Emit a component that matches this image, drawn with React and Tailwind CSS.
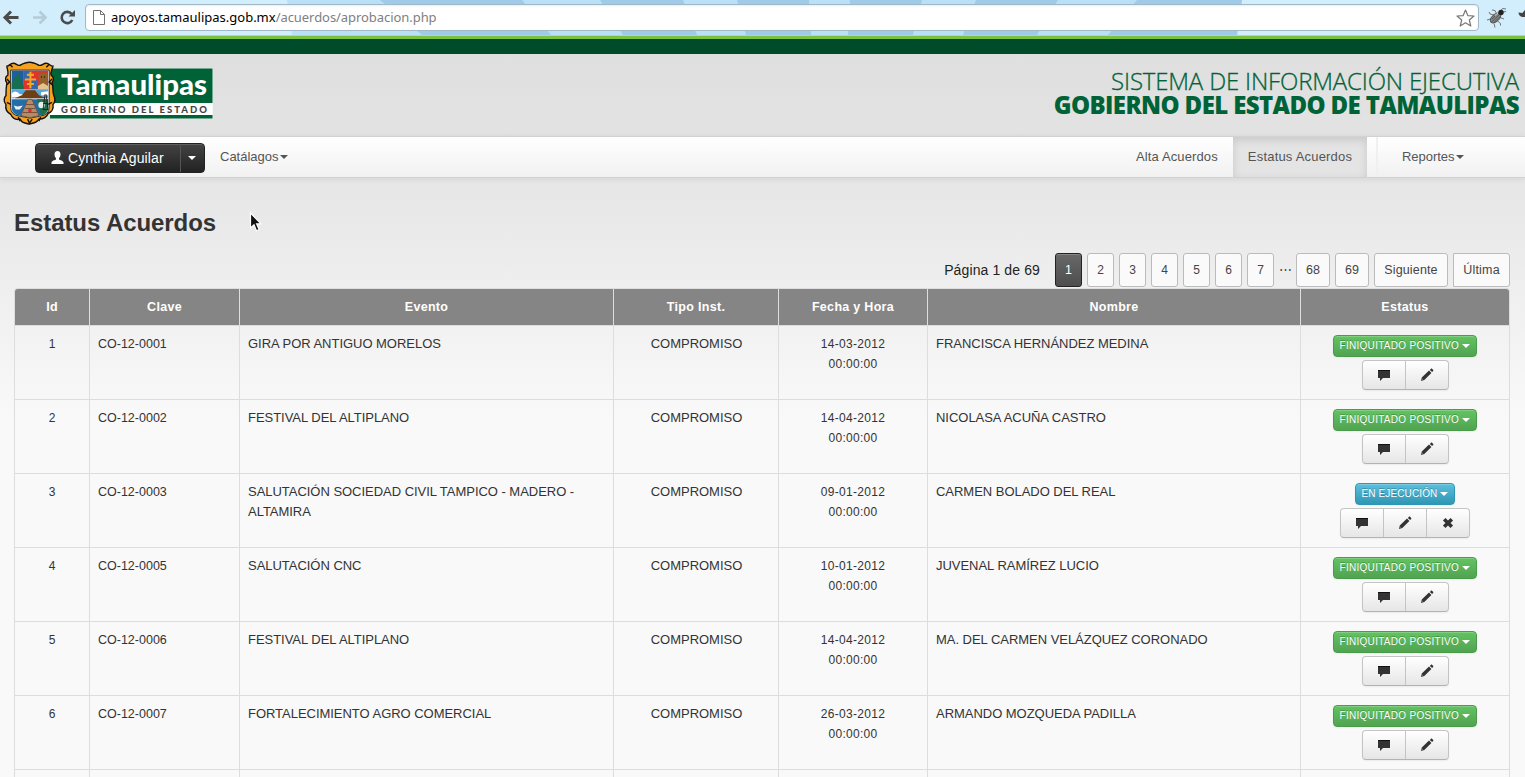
import React from "react";

const sans = "font-['Liberation_Sans',Arial,sans-serif]";

const rows = [
  ["1", "CO-12-0001", "GIRA POR ANTIGUO MORELOS", "14-03-2012", "FRANCISCA HERNÁNDEZ MEDINA", "done"],
  ["2", "CO-12-0002", "FESTIVAL DEL ALTIPLANO", "14-04-2012", "NICOLASA ACUÑA CASTRO", "done"],
  ["3", "CO-12-0003", "SALUTACIÓN SOCIEDAD CIVIL TAMPICO - MADERO - ALTAMIRA", "09-01-2012", "CARMEN BOLADO DEL REAL", "running"],
  ["4", "CO-12-0005", "SALUTACIÓN CNC", "10-01-2012", "JUVENAL RAMÍREZ LUCIO", "done"],
  ["5", "CO-12-0006", "FESTIVAL DEL ALTIPLANO", "14-04-2012", "MA. DEL CARMEN VELÁZQUEZ CORONADO", "done"],
  ["6", "CO-12-0007", "FORTALECIMIENTO AGRO COMERCIAL", "26-03-2012", "ARMANDO MOZQUEDA PADILLA", "done"],
];

const cols = "grid grid-cols-[75px_150px_374px_165px_149px_373px_210px]";

function Caret({ className = "" }) {
  return <svg width="8" height="4" viewBox="0 0 8 4" className={"shrink-0 " + className}><path d="M0 0h8L4 4z" fill="currentColor" /></svg>;
}

function CommentIcon() {
  return <svg width="14" height="14" viewBox="0 0 14 14"><path d="M1 2h12v8H6l-3 3v-3H1z" fill="#333" /><path d="M1 2h12v1H1z" fill="#111" /></svg>;
}

function PencilIcon() {
  return (
    <svg width="14" height="14" viewBox="0 0 14 14" fill="#333">
      <path d="M1 13l.8-3.400L9 2.600 11.400 5 4.300 12.100zM9.800 1.900l1-1c.5-.4 1-.4 1.400 0l.9.9c.4.4.4.9 0 1.300l-1 1z" />
      <path d="M2.200 11l1 .9" stroke="#bbb" strokeWidth=".6" />
    </svg>
  );
}

function RemoveIcon() {
  return <svg width="14" height="14" viewBox="0 0 14 14"><path d="M3.200 3.200l7.600 7.600M10.800 3.200l-7.600 7.600" stroke="#333" strokeWidth="3.600" /></svg>;
}

function Status({ kind }) {
  const running = kind === "running";
  const icons = running ? [CommentIcon, PencilIcon, RemoveIcon] : [CommentIcon, PencilIcon];
  return (
    <div className={"flex flex-col items-center pt-[9px] " + (running ? "pr-[2px]" : "pr-px")}>
      <div
        className={
          "flex h-[22px] items-center justify-between rounded border px-1.5 text-[10px] text-white [text-shadow:0_-1px_0_rgba(0,0,0,.25)] shadow-[inset_0_1px_0_rgba(255,255,255,.2),0_1px_2px_rgba(0,0,0,.05)] " +
          (running
            ? "w-[100px] border-[#2f96b4] bg-linear-to-b from-[#5bc0de] to-[#2f96b4]"
            : "mr-px w-[144px] border-[#4a9c4a] bg-linear-to-b from-[#62c462] to-[#51a351]")
        }
      >
        <span className={"whitespace-nowrap " + (running ? "tracking-[0.12px]" : "tracking-[0.29px]")}>
          {running ? "EN EJECUCIÓN" : "FINIQUITADO POSITIVO"}
        </span>
        <Caret />
      </div>
      <div className="mt-[3px] flex h-[30px] rounded border border-[#c4c4c4] border-b-[#b3b3b3] bg-linear-to-b from-white to-[#e6e6e6] shadow-[0_1px_2px_rgba(0,0,0,.06)]">
        {icons.map((Icon, i) => (
          <div key={i} className={"flex items-center justify-center " + (i ? "w-[43px] border-l border-[#c4c4c4]" : "w-[42px]")}>
            <Icon />
          </div>
        ))}
      </div>
    </div>
  );
}

function Browser() {
  return (
    <div className="relative flex h-9 items-center overflow-hidden border-b border-[#b3cfdd] bg-[#d2eefd]">
      <svg className="absolute left-0 top-0" width="1525" height="35">
        <path d="M287 0h955l-5 35H292z" fill="#b9e0f6" />
        <path d="M380 0h142l29 35H422zM600 0h83l14 35h-74zM737 0h72l2 35h-65zM850 0h72l-9 35h-65zM976 0h82l-21 35h-74zM1137 0h105l-5 35h-129z" fill="#9fcbe8" />
      </svg>
      <svg className="relative" width="85" height="35" fill="none">
        <path d="M18.500 17.500H6M11 11.500l-6 6 6 6" stroke="#4b4b4b" strokeWidth="3" />
        <path d="M33 17.500h11.500M39.500 11.500l6 6-6 6" stroke="#b5cbd6" strokeWidth="2.600" />
        <path d="M72.300 20a5.600 5.600 0 1 1-.6-6" stroke="#4b4b4b" strokeWidth="2.600" />
        <path d="M75 10v6.500h-6.500z" fill="#4b4b4b" />
      </svg>
      <div className="relative flex h-[27px] w-[1394px] items-center rounded-[4px] border border-[#9fb9c8] bg-white pl-[7px] shadow-[inset_0_1px_2px_rgba(0,0,0,.08)]">
        <svg width="12" height="15" fill="none" stroke="#707070"><path d="M.5.5h7l4 4v10H.5zM7.500.5v4h4" /></svg>
        <span className="mb-[2px] ml-[6px] whitespace-nowrap font-['Noto_Sans','Open_Sans',sans-serif] text-[13px] leading-5 tracking-[0px] text-black">
          apoyos.tamaulipas.gob.mx<span className="tracking-[-0.06px] text-[#808080]">/acuerdos/aprobacion.php</span>
        </span>
        <svg className="ml-auto mr-[3px]" width="19" height="18" viewBox="0 0 19 18" fill="#fff" stroke="#777" strokeWidth="1.200" strokeLinejoin="round">
          <path d="M9.500 1l2.300 5.600 6.200.4-4.700 4 1.500 6-5.300-3.200L4.200 17l1.500-6L1 7l6.200-.4z" />
        </svg>
      </div>
      <svg className="relative ml-[7px]" width="39" height="22" viewBox="0 0 39 22">
        <g stroke="#666" strokeWidth=".9" fill="none">
          <path d="M6 11.500L1 13M8 8L4 7 3 5M10.500 6.500L9 3.500 6 3M8 16.500l1 4M11.500 14l3 2.500v2M14 10.500l4 1.500M17 5l3-.5M15 3.500l1.500-2L20 2" />
        </g>
        <ellipse cx="9.500" cy="11" rx="6.300" ry="3.600" transform="rotate(-42 9.500 11)" fill="#858585" stroke="#444" strokeWidth=".8" />
        <path d="M5.500 15l8-7.500M6 12l6-6M8 15.500l6-6" stroke="#4a4a4a" strokeWidth=".8" />
        <path d="M9 8.500l3-2.500" stroke="#ddd" />
        <circle cx="15" cy="5.500" r="2.700" fill="#222" />
        <path d="M40 3a4 4 0 0 0-2 1l-1.500 2-4-.5a4.500 4.500 0 0 0 4.500 4.500h3z" fill="#444" />
      </svg>
    </div>
  );
}

function Logo() {
  return (
    <svg width="216" height="66" viewBox="0 0 216 66">
      <path d="M50 7h163v51H50z" fill="#e6f1eb" />
      <path d="M50 7.500h162.500v34.500H50zM50 54h162.500v3.500H50z" fill="#006338" />
      <path d="M50 42.500h162.500V54H50z" fill="#fff" />
      <text x="61" y="34" textLength="146" lengthAdjust="spacingAndGlyphs" fill="#fff" fontFamily="Lato, sans-serif" fontWeight="900" fontSize="28">Tamaulipas</text>
      <text x="61" y="51.500" textLength="146" fill="#444" fontFamily="Lato, sans-serif" fontWeight="900" fontSize="9.500">GOBIERNO DEL ESTADO</text>
      <g transform="translate(2.200 .3) scale(.94 .98)">
        <path d="M5 5c3 0 3-3 7-3 3 0 4 3 7 2 4-2 7-3 10-3s6 1 10 3c3 1 4-2 8-2 3 0 4 3 7 3-1 4-3 6-2 9 3 2 3 5 1 8 2 5 0 9 2 13 2 4 1 7-1 9 1 5-2 8-5 9-2 5-6 6-10 6-2 4-6 4-10 5-5-1-8-1-10-5-4 1-8-1-10-5-4-2-6-5-5-10-3-3-2-7 0-9 0-5 0-8 1-13-2-3-2-6 1-8 1-4-1-6-1-9z" fill="#f6a11d" stroke="#15130e" strokeWidth="1.500" />
        <path d="M9 9h41v38q0 8-10 9l-10.500 2L19 56q-10-1-10-9z" fill="#fff" stroke="#222" />
        <g transform="translate(-1.700 -.7) scale(1.075 1.040)">
          <path d="M11 10h12v18H11z" fill="#1c5f9e" />
          <path d="M23 10h13v18H23z" fill="#e0342b" />
          <path d="M23 10h6.500v9H23zM29.500 19H36v9h-6.500z" fill="#3267ad" />
          <path d="M36 10h11v18H36z" fill="#d23b2c" />
          <path d="M11 22l3-5 3-5 3 6 3 8v2H11z" fill="#176e50" />
          <path d="M29.500 11v16M24 18.500h11M26 14h7M26 23h7" stroke="#f5a623" strokeWidth="2" />
          <path d="M38 14l3-2 3 1 2-1v13H38z" fill="#93622c" />
          <path d="M40 15h1v2h-1zM43 15h1v2h-1z" fill="#4c2b12" />
          <path d="M37 25l5-3 5 3v3H37z" fill="#e4c48a" />
          <path d="M11 28h36v9H11z" fill="#5aa5dc" />
          <path d="M11 32q4-4 8 1h5v3H11zM40 31l7-1v4h-7z" fill="#fff" />
          <path d="M14 37l7-3 4-5h9l4 5 7 3z" fill="#6e3f12" />
          <path d="M11 38h36v8q0 7-8 8l-10 2-10-2q-8-1-8-8z" fill="#256da9" />
          <path d="M36 38h11v8q0 6-7 8z" fill="#1e704b" />
          <path d="M27 38h4l7 16-9 2-9-2z" fill="#b48c68" stroke="#69472e" strokeWidth=".7" />
          <path d="M25 43h8M24 47h10M22 51h14" stroke="#795136" />
          <circle cx="29" cy="49" r="1.800" fill="#d92d32" />
          <path d="M13 44l4 1 5-1-3 4h-4z" fill="#e9f0f2" />
          <circle cx="40.500" cy="43.500" r="3.200" fill="#e9eee9" />
          <path d="M44 33l-2 15h5l-2-15M42 42h4" fill="none" stroke="#111" strokeWidth=".8" />
        </g>
        <path d="M8 3l3 3M50 3l-3 3M5 18l3 3-3 3M53 18l-3 3 3 3M5 42l4 2M53 42l-4 2M17 57l2 4M41 57l-2 4M27 59l2 4 3-4" fill="none" stroke="#15130e" strokeWidth="1.500" />
      </g>
    </svg>
  );
}

function Navbar() {
  return (
    <nav className="relative flex h-[42px] border-y border-[#d2d2d2] bg-linear-to-b from-white to-[#f1f1f1] text-[13px] leading-5 tracking-[0.2px] text-[#555] shadow-[0_1px_6px_rgba(0,0,0,.08)]">
      <div className="ml-[35px] mt-[6px] flex h-[30px] w-[170px] rounded border border-[#222] bg-linear-to-b from-[#444] to-[#222] text-white shadow-[inset_0_1px_0_rgba(255,255,255,.15)]">
        <div className="flex w-[144px] items-center pl-[15px] text-sm">
          <svg width="13" height="13" viewBox="0 0 13 13" className="mb-px mr-1"><path d="M6.500 0C8.500 0 9.500 1.300 9.500 3.200 9.500 5 8.700 6.500 8 7.200v1.300c1 .8 4.500 1.200 4.500 3V13h-12v-1.500c0-1.800 3.500-2.200 4.500-3V7.200C4.300 6.500 3.500 5 3.500 3.200 3.500 1.300 4.500 0 6.500 0z" fill="#fff" /></svg>
          <span className="whitespace-nowrap tracking-[0.1px]">Cynthia Aguilar</span>
        </div>
        <div className="flex grow items-center justify-center border-l border-[#555] pr-px"><Caret /></div>
      </div>
      <div className="ml-[15px] flex h-10 w-20 items-center whitespace-nowrap tracking-[0px]">Catálagos<Caret className="ml-px" /></div>
      <div className="ml-auto flex h-10 w-[97px] items-center whitespace-nowrap tracking-[0.12px]">Alta Acuerdos</div>
      <div className="flex h-10 w-[134px] items-center justify-center whitespace-nowrap bg-[#e4e4e4] shadow-[inset_0_3px_8px_rgba(0,0,0,.125)]">Estatus Acuerdos</div>
      <div className="ml-[9px] flex h-10 w-[149px] items-center whitespace-nowrap border-l-2 border-[#f0f0f0] pl-6 tracking-[-0.05px]">Reportes<Caret className="ml-[2px]" /></div>
    </nav>
  );
}

function Pager() {
  const btn = "flex h-[34px] items-center justify-center rounded-[3px] border ";
  const plain = btn + "border-[#bbb] bg-[#fafafa] text-[#444] ";
  return (
    <div className="mt-[14px] flex h-[34px] justify-end gap-[5px] pr-[15px] text-[12.5px]">
      <span className="mr-[10px] flex items-center whitespace-nowrap text-sm tracking-[0.12px] text-[#222]">Página 1 de 69</span>
      <div className={btn + "w-[27px] border-[#222] bg-linear-to-b from-[#686868] to-[#4e4e4e] text-white shadow-[inset_0_1px_0_rgba(255,255,255,.2)]"}>1</div>
      {["2", "3", "4", "5", "6", "7"].map((n) => <div key={n} className={plain + "w-[27px] text-xs"}>{n}</div>)}
      <span className="flex w-3 items-center justify-center text-[#444]">⋯</span>
      <div className={plain + "w-[34px]"}>68</div>
      <div className={plain + "w-[34px]"}>69</div>
      <div className={plain + "w-[74px] tracking-[0.15px]"}>Siguiente</div>
      <div className={plain + "w-[57px] rounded-l-none tracking-[0.2px]"}>Última</div>
    </div>
  );
}

function Table() {
  const cell = "border-l border-t border-[#ddd] px-2 pt-2 ";
  const headers = ["Id", "Clave", "Evento", "Tipo Inst.", "Fecha y Hora", "Nombre", "Estatus"];
  return (
    <div className="mx-[14px] mt-px w-[1496px] text-[13px] leading-5 text-[#333]">
      <div className="h-[37px] overflow-hidden rounded-t border-x border-t border-[#ddd] bg-[#858585] text-center text-[12.5px] font-bold tracking-[0.3px] text-white">
        <div className="grid h-full grid-cols-[74px_150px_374px_165px_149px_373px_209px]">
          {headers.map((h, i) => <div key={h} className={"pt-2 " + (i ? "border-l border-[#ddd]" : "")}>{h}</div>)}
        </div>
      </div>
      {rows.map(([id, key, event, date, name, kind]) => (
        <div key={id} className={cols + " h-[74px] border-r border-[#ddd]"}>
          <div className={cell + "text-center text-xs leading-5"}>{id}</div>
          <div className={cell + "text-[12.5px]"}>{key}</div>
          <div className={cell + "tracking-[-0.03px]"}>{event}</div>
          <div className={cell + "pl-[9px] text-center tracking-[-0.02px]"}>COMPROMISO</div>
          <div className={cell + "text-center text-xs leading-5 tracking-[0.3px]"}>{date}<br />00:00:00</div>
          <div className={cell + "tracking-[-0.03px]"}>{name}</div>
          <div className="border-l border-t border-[#ddd]"><Status kind={kind} /></div>
        </div>
      ))}
      <div className={cols + " h-[74px] border-r border-[#ddd]"}>
        {headers.map((h) => <div key={h} className={cell} />)}
      </div>
    </div>
  );
}

export default function App() {
  return (
    <div className={"relative h-[777px] w-[1525px] overflow-hidden bg-[#f9f9f9] " + sans}>
      <Browser />
      <div className="h-[18px] border-t-[3px] border-[#7ac142] bg-[#004b2a]" />
      <header className="flex h-[82px] justify-between bg-linear-to-b from-[#dfdfdf] to-[#e3e3e3] pt-[7px]">
        <Logo />
        <div className="mr-[6px] flex flex-col items-end whitespace-nowrap pt-[8px] font-['Open_Sans',sans-serif] text-2xl leading-6 text-[#006338]">
          <div className="font-light tracking-[-0.17px] [-webkit-text-stroke:0.3px_#006338]">SISTEMA DE INFORMACIÓN EJECUTIVA</div>
          <div className="font-extrabold tracking-[-0.6px]">GOBIERNO DEL ESTADO DE TAMAULIPAS</div>
        </div>
      </header>
      <Navbar />
      <main className="bg-linear-to-b from-[#e6e6e6] to-[#f9f9f9] to-[240px] pt-[25px]">
        <h1 className="ml-[14px] h-9 text-2xl font-bold leading-10 tracking-[-0.07px] text-[#333]">Estatus Acuerdos</h1>
        <Pager />
        <Table />
      </main>
      <svg className="absolute left-[249px] top-[211px]" width="14" height="22" viewBox="0 0 14 22">
        <path d="M1.500 2v15l3.500-3.300 2.500 6 2.600-1.200-2.500-5.700H12z" fill="#111" stroke="#fff" strokeWidth="1.200" />
      </svg>
    </div>
  );
}
